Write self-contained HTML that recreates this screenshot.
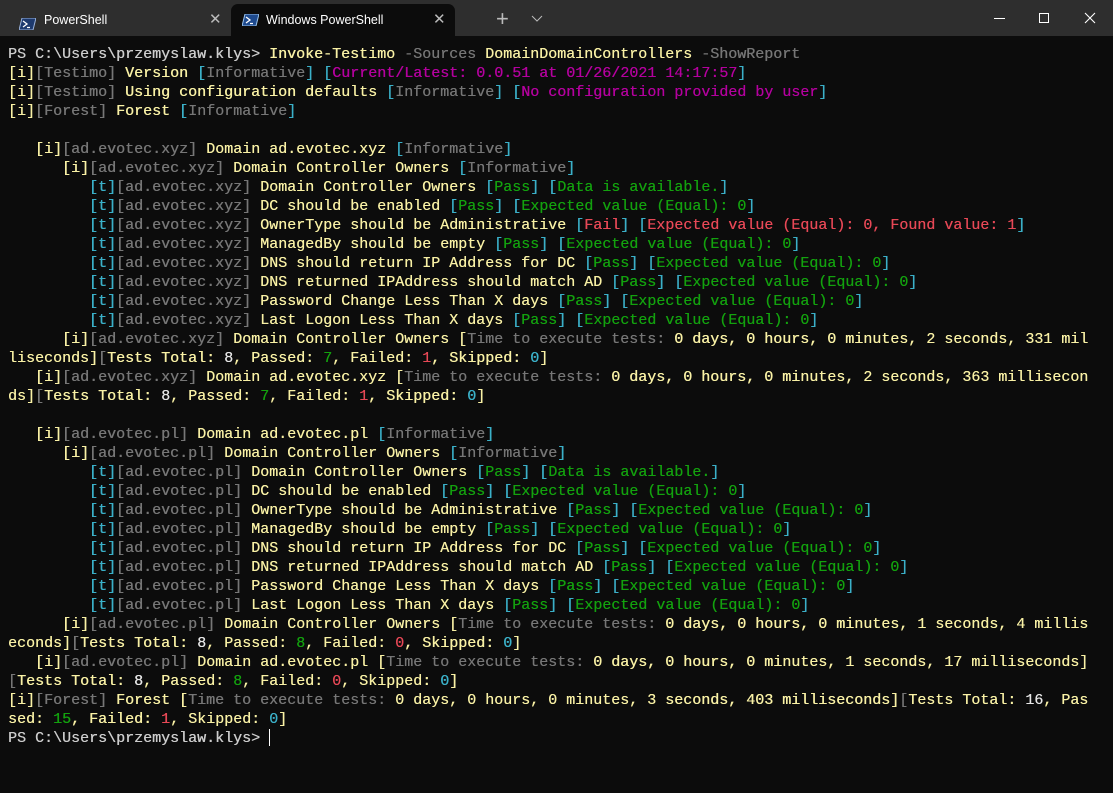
<!DOCTYPE html>
<html><head><meta charset="utf-8"><style>
*{margin:0;padding:0;box-sizing:border-box}
body{width:1113px;height:793px;background:#0c0c0c;overflow:hidden;position:relative;font-family:"Liberation Sans",sans-serif}
.bar{position:absolute;left:0;top:0;width:1113px;height:36px;background:#2e2e2e}
.tab{position:absolute;top:4px;height:32px;color:#fff;font-size:12.5px;line-height:32px}
.tab.active{left:231px;width:224px;background:#0c0c0c;border-radius:7px 7px 0 0}
.ico{position:absolute;top:10px;width:17px;height:12px}
.x{position:absolute;color:#bbb;font-size:15px}
pre{position:absolute;left:8px;top:45px;font-family:"Liberation Mono",monospace;font-size:15px;line-height:19px;color:#cccccc;letter-spacing:0;font-weight:normal;text-shadow:0.3px 0 0 currentColor}
.y{color:#f9f1a5}.g{color:#767676}.c{color:#3bb0c8}.gr{color:#13a10e}.r{color:#e74856}.m{color:#b4009e}.w{color:#e6e6e6}.p{color:#cccccc}
</style></head><body>
<div class="bar">
 <div class="tab" style="left:0;width:231px">
  <svg class="ico" style="left:19px;top:14px" viewBox="0 0 17 12"><path d="M3 0H17L14 12H0Z" fill="#1e3a6e" stroke="#9bb4de" stroke-width="1"/><path d="M4 3L8 6L4 9M8 9.5H11" stroke="#fff" stroke-width="1.3" fill="none"/></svg>
  <span style="position:absolute;left:44px;top:0">PowerShell</span>
  <span class="x" style="left:209px;top:0">✕</span>
 </div>
 <div class="tab active">
  <svg class="ico" style="left:11px;top:10px" viewBox="0 0 17 12"><path d="M3 0H17L14 12H0Z" fill="#1e4a8e" stroke="#9bc4ee" stroke-width="1"/><path d="M4 3L8 6L4 9M8 9.5H11" stroke="#fff" stroke-width="1.3" fill="none"/></svg>
  <span style="position:absolute;left:35px;top:0">Windows PowerShell</span>
  <span class="x" style="left:202px;top:0">✕</span>
 </div>
 <span class="x" style="left:496px;top:6px;font-size:22px;color:#bbb">+</span>
 <svg style="position:absolute;left:531px;top:15px" width="12" height="7"><path d="M1 1L6 6L11 1" stroke="#bbb" fill="none"/></svg>
 <div style="position:absolute;left:994px;top:18px;width:11px;height:1px;background:#fff"></div>
 <div style="position:absolute;left:1039px;top:13px;width:10px;height:10px;border:1px solid #fff"></div>
 <svg style="position:absolute;left:1084px;top:12px" width="12" height="12"><path d="M1 1L11 11M11 1L1 11" stroke="#fff" stroke-width="1.1"/></svg>
</div>
<pre><span class="p">PS C:\Users\przemyslaw.klys&gt; </span><span class="y">Invoke-Testimo</span><span class="g"> -Sources</span><span class="y"> DomainDomainControllers</span><span class="g"> -ShowReport</span>
<span class="y">[i]</span><span class="g">[Testimo]</span><span class="y"> Version </span><span class="c">[</span><span class="g">Informative</span><span class="c">]</span> <span class="c">[</span><span class="m">Current/Latest: 0.0.51 at 01/26/2021 14:17:57</span><span class="c">]</span>
<span class="y">[i]</span><span class="g">[Testimo]</span><span class="y"> Using configuration defaults </span><span class="c">[</span><span class="g">Informative</span><span class="c">]</span> <span class="c">[</span><span class="m">No configuration provided by user</span><span class="c">]</span>
<span class="y">[i]</span><span class="g">[Forest]</span><span class="y"> Forest </span><span class="c">[</span><span class="g">Informative</span><span class="c">]</span>

   <span class="y">[i]</span><span class="g">[ad.evotec.xyz]</span><span class="y"> Domain ad.evotec.xyz </span><span class="c">[</span><span class="g">Informative</span><span class="c">]</span>
      <span class="y">[i]</span><span class="g">[ad.evotec.xyz]</span><span class="y"> Domain Controller Owners </span><span class="c">[</span><span class="g">Informative</span><span class="c">]</span>
         <span class="c">[t]</span><span class="g">[ad.evotec.xyz]</span><span class="y"> Domain Controller Owners </span><span class="c">[</span><span class="gr">Pass</span><span class="c">]</span> <span class="c">[</span><span class="gr">Data is available.</span><span class="c">]</span>
         <span class="c">[t]</span><span class="g">[ad.evotec.xyz]</span><span class="y"> DC should be enabled </span><span class="c">[</span><span class="gr">Pass</span><span class="c">]</span> <span class="c">[</span><span class="gr">Expected value (Equal): 0</span><span class="c">]</span>
         <span class="c">[t]</span><span class="g">[ad.evotec.xyz]</span><span class="y"> OwnerType should be Administrative </span><span class="c">[</span><span class="r">Fail</span><span class="c">]</span> <span class="c">[</span><span class="r">Expected value (Equal): 0, Found value: 1</span><span class="c">]</span>
         <span class="c">[t]</span><span class="g">[ad.evotec.xyz]</span><span class="y"> ManagedBy should be empty </span><span class="c">[</span><span class="gr">Pass</span><span class="c">]</span> <span class="c">[</span><span class="gr">Expected value (Equal): 0</span><span class="c">]</span>
         <span class="c">[t]</span><span class="g">[ad.evotec.xyz]</span><span class="y"> DNS should return IP Address for DC </span><span class="c">[</span><span class="gr">Pass</span><span class="c">]</span> <span class="c">[</span><span class="gr">Expected value (Equal): 0</span><span class="c">]</span>
         <span class="c">[t]</span><span class="g">[ad.evotec.xyz]</span><span class="y"> DNS returned IPAddress should match AD </span><span class="c">[</span><span class="gr">Pass</span><span class="c">]</span> <span class="c">[</span><span class="gr">Expected value (Equal): 0</span><span class="c">]</span>
         <span class="c">[t]</span><span class="g">[ad.evotec.xyz]</span><span class="y"> Password Change Less Than X days </span><span class="c">[</span><span class="gr">Pass</span><span class="c">]</span> <span class="c">[</span><span class="gr">Expected value (Equal): 0</span><span class="c">]</span>
         <span class="c">[t]</span><span class="g">[ad.evotec.xyz]</span><span class="y"> Last Logon Less Than X days </span><span class="c">[</span><span class="gr">Pass</span><span class="c">]</span> <span class="c">[</span><span class="gr">Expected value (Equal): 0</span><span class="c">]</span>
      <span class="y">[i]</span><span class="g">[ad.evotec.xyz]</span><span class="y"> Domain Controller Owners [</span><span class="g">Time to execute tests:</span><span class="y"> 0 days, 0 hours, 0 minutes, 2 seconds, 331 mil
liseconds]</span><span class="g">[</span><span class="y">Tests Total: </span><span class="w">8</span><span class="y">, Passed: </span><span class="gr">7</span><span class="y">, Failed: </span><span class="r">1</span><span class="y">, Skipped: </span><span class="c">0</span><span class="y">]</span>
   <span class="y">[i]</span><span class="g">[ad.evotec.xyz]</span><span class="y"> Domain ad.evotec.xyz [</span><span class="g">Time to execute tests:</span><span class="y"> 0 days, 0 hours, 0 minutes, 2 seconds, 363 millisecon
ds]</span><span class="g">[</span><span class="y">Tests Total: </span><span class="w">8</span><span class="y">, Passed: </span><span class="gr">7</span><span class="y">, Failed: </span><span class="r">1</span><span class="y">, Skipped: </span><span class="c">0</span><span class="y">]</span>

   <span class="y">[i]</span><span class="g">[ad.evotec.pl]</span><span class="y"> Domain ad.evotec.pl </span><span class="c">[</span><span class="g">Informative</span><span class="c">]</span>
      <span class="y">[i]</span><span class="g">[ad.evotec.pl]</span><span class="y"> Domain Controller Owners </span><span class="c">[</span><span class="g">Informative</span><span class="c">]</span>
         <span class="c">[t]</span><span class="g">[ad.evotec.pl]</span><span class="y"> Domain Controller Owners </span><span class="c">[</span><span class="gr">Pass</span><span class="c">]</span> <span class="c">[</span><span class="gr">Data is available.</span><span class="c">]</span>
         <span class="c">[t]</span><span class="g">[ad.evotec.pl]</span><span class="y"> DC should be enabled </span><span class="c">[</span><span class="gr">Pass</span><span class="c">]</span> <span class="c">[</span><span class="gr">Expected value (Equal): 0</span><span class="c">]</span>
         <span class="c">[t]</span><span class="g">[ad.evotec.pl]</span><span class="y"> OwnerType should be Administrative </span><span class="c">[</span><span class="gr">Pass</span><span class="c">]</span> <span class="c">[</span><span class="gr">Expected value (Equal): 0</span><span class="c">]</span>
         <span class="c">[t]</span><span class="g">[ad.evotec.pl]</span><span class="y"> ManagedBy should be empty </span><span class="c">[</span><span class="gr">Pass</span><span class="c">]</span> <span class="c">[</span><span class="gr">Expected value (Equal): 0</span><span class="c">]</span>
         <span class="c">[t]</span><span class="g">[ad.evotec.pl]</span><span class="y"> DNS should return IP Address for DC </span><span class="c">[</span><span class="gr">Pass</span><span class="c">]</span> <span class="c">[</span><span class="gr">Expected value (Equal): 0</span><span class="c">]</span>
         <span class="c">[t]</span><span class="g">[ad.evotec.pl]</span><span class="y"> DNS returned IPAddress should match AD </span><span class="c">[</span><span class="gr">Pass</span><span class="c">]</span> <span class="c">[</span><span class="gr">Expected value (Equal): 0</span><span class="c">]</span>
         <span class="c">[t]</span><span class="g">[ad.evotec.pl]</span><span class="y"> Password Change Less Than X days </span><span class="c">[</span><span class="gr">Pass</span><span class="c">]</span> <span class="c">[</span><span class="gr">Expected value (Equal): 0</span><span class="c">]</span>
         <span class="c">[t]</span><span class="g">[ad.evotec.pl]</span><span class="y"> Last Logon Less Than X days </span><span class="c">[</span><span class="gr">Pass</span><span class="c">]</span> <span class="c">[</span><span class="gr">Expected value (Equal): 0</span><span class="c">]</span>
      <span class="y">[i]</span><span class="g">[ad.evotec.pl]</span><span class="y"> Domain Controller Owners [</span><span class="g">Time to execute tests:</span><span class="y"> 0 days, 0 hours, 0 minutes, 1 seconds, 4 millis
econds]</span><span class="g">[</span><span class="y">Tests Total: </span><span class="w">8</span><span class="y">, Passed: </span><span class="gr">8</span><span class="y">, Failed: </span><span class="r">0</span><span class="y">, Skipped: </span><span class="c">0</span><span class="y">]</span>
   <span class="y">[i]</span><span class="g">[ad.evotec.pl]</span><span class="y"> Domain ad.evotec.pl [</span><span class="g">Time to execute tests:</span><span class="y"> 0 days, 0 hours, 0 minutes, 1 seconds, 17 milliseconds]</span>
<span class="g">[</span><span class="y">Tests Total: </span><span class="w">8</span><span class="y">, Passed: </span><span class="gr">8</span><span class="y">, Failed: </span><span class="r">0</span><span class="y">, Skipped: </span><span class="c">0</span><span class="y">]</span>
<span class="y">[i]</span><span class="g">[Forest]</span><span class="y"> Forest [</span><span class="g">Time to execute tests:</span><span class="y"> 0 days, 0 hours, 0 minutes, 3 seconds, 403 milliseconds]</span><span class="g">[</span><span class="y">Tests Total: </span><span class="w">16</span><span class="y">, Pas
sed: </span><span class="gr">15</span><span class="y">, Failed: </span><span class="r">1</span><span class="y">, Skipped: </span><span class="c">0</span><span class="y">]</span>
<span class="p">PS C:\Users\przemyslaw.klys&gt; </span></pre>
<div style="position:absolute;left:269px;top:729px;width:1px;height:17px;background:#fff"></div>
</body></html>
